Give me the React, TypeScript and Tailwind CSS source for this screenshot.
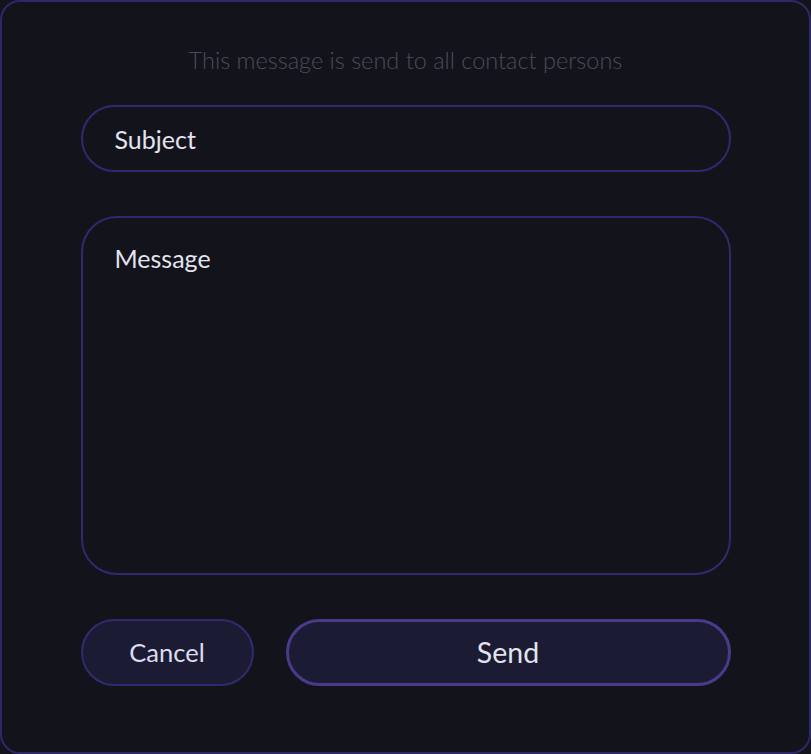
export default function App() {
  return (
    <div className="w-[811px] h-[754px] bg-[#13131c]" style={{ fontFamily: "Lato, 'Noto Sans', sans-serif" }}>
      <div className="w-full h-full rounded-[20px] border-2 border-[#2c2966] bg-[#13131c] flex flex-col items-center">
        <p className="mt-[43px] text-[23.5px] leading-[30px] font-light text-[#4b4b5a]">
          This message is send to all contact persons
        </p>
        <div className="mt-[30px] w-[650px] flex flex-col">
          <input
            placeholder="Subject"
            className="h-[67px] w-full rounded-full border-2 border-[#2f2a6e] bg-transparent px-[32px] text-[25px] text-[#e3e3ee] placeholder:text-[#e3e3ee] outline-none"
          />
          <textarea
            placeholder="Message"
            className="mt-[44px] h-[359px] w-full resize-none rounded-[36px] border-2 border-[#2f2a6e] bg-transparent px-[32px] pt-[24px] text-[25px] leading-[32px] text-[#e3e3ee] placeholder:text-[#e3e3ee] outline-none"
          />
          <div className="mt-[44px] flex gap-[32px]">
            <button className="h-[67px] w-[173px] rounded-full border-2 border-[#302b70] bg-[#1b1c33] text-[25.5px] text-[#dcdcf0]">
              Cancel
            </button>
            <button className="h-[67px] flex-1 rounded-full border-[3px] border-[#4b3a8b] bg-[#1b1c33] text-[28.5px] text-[#e3e3ee]">
              Send
            </button>
          </div>
        </div>
      </div>
    </div>
  );
}
